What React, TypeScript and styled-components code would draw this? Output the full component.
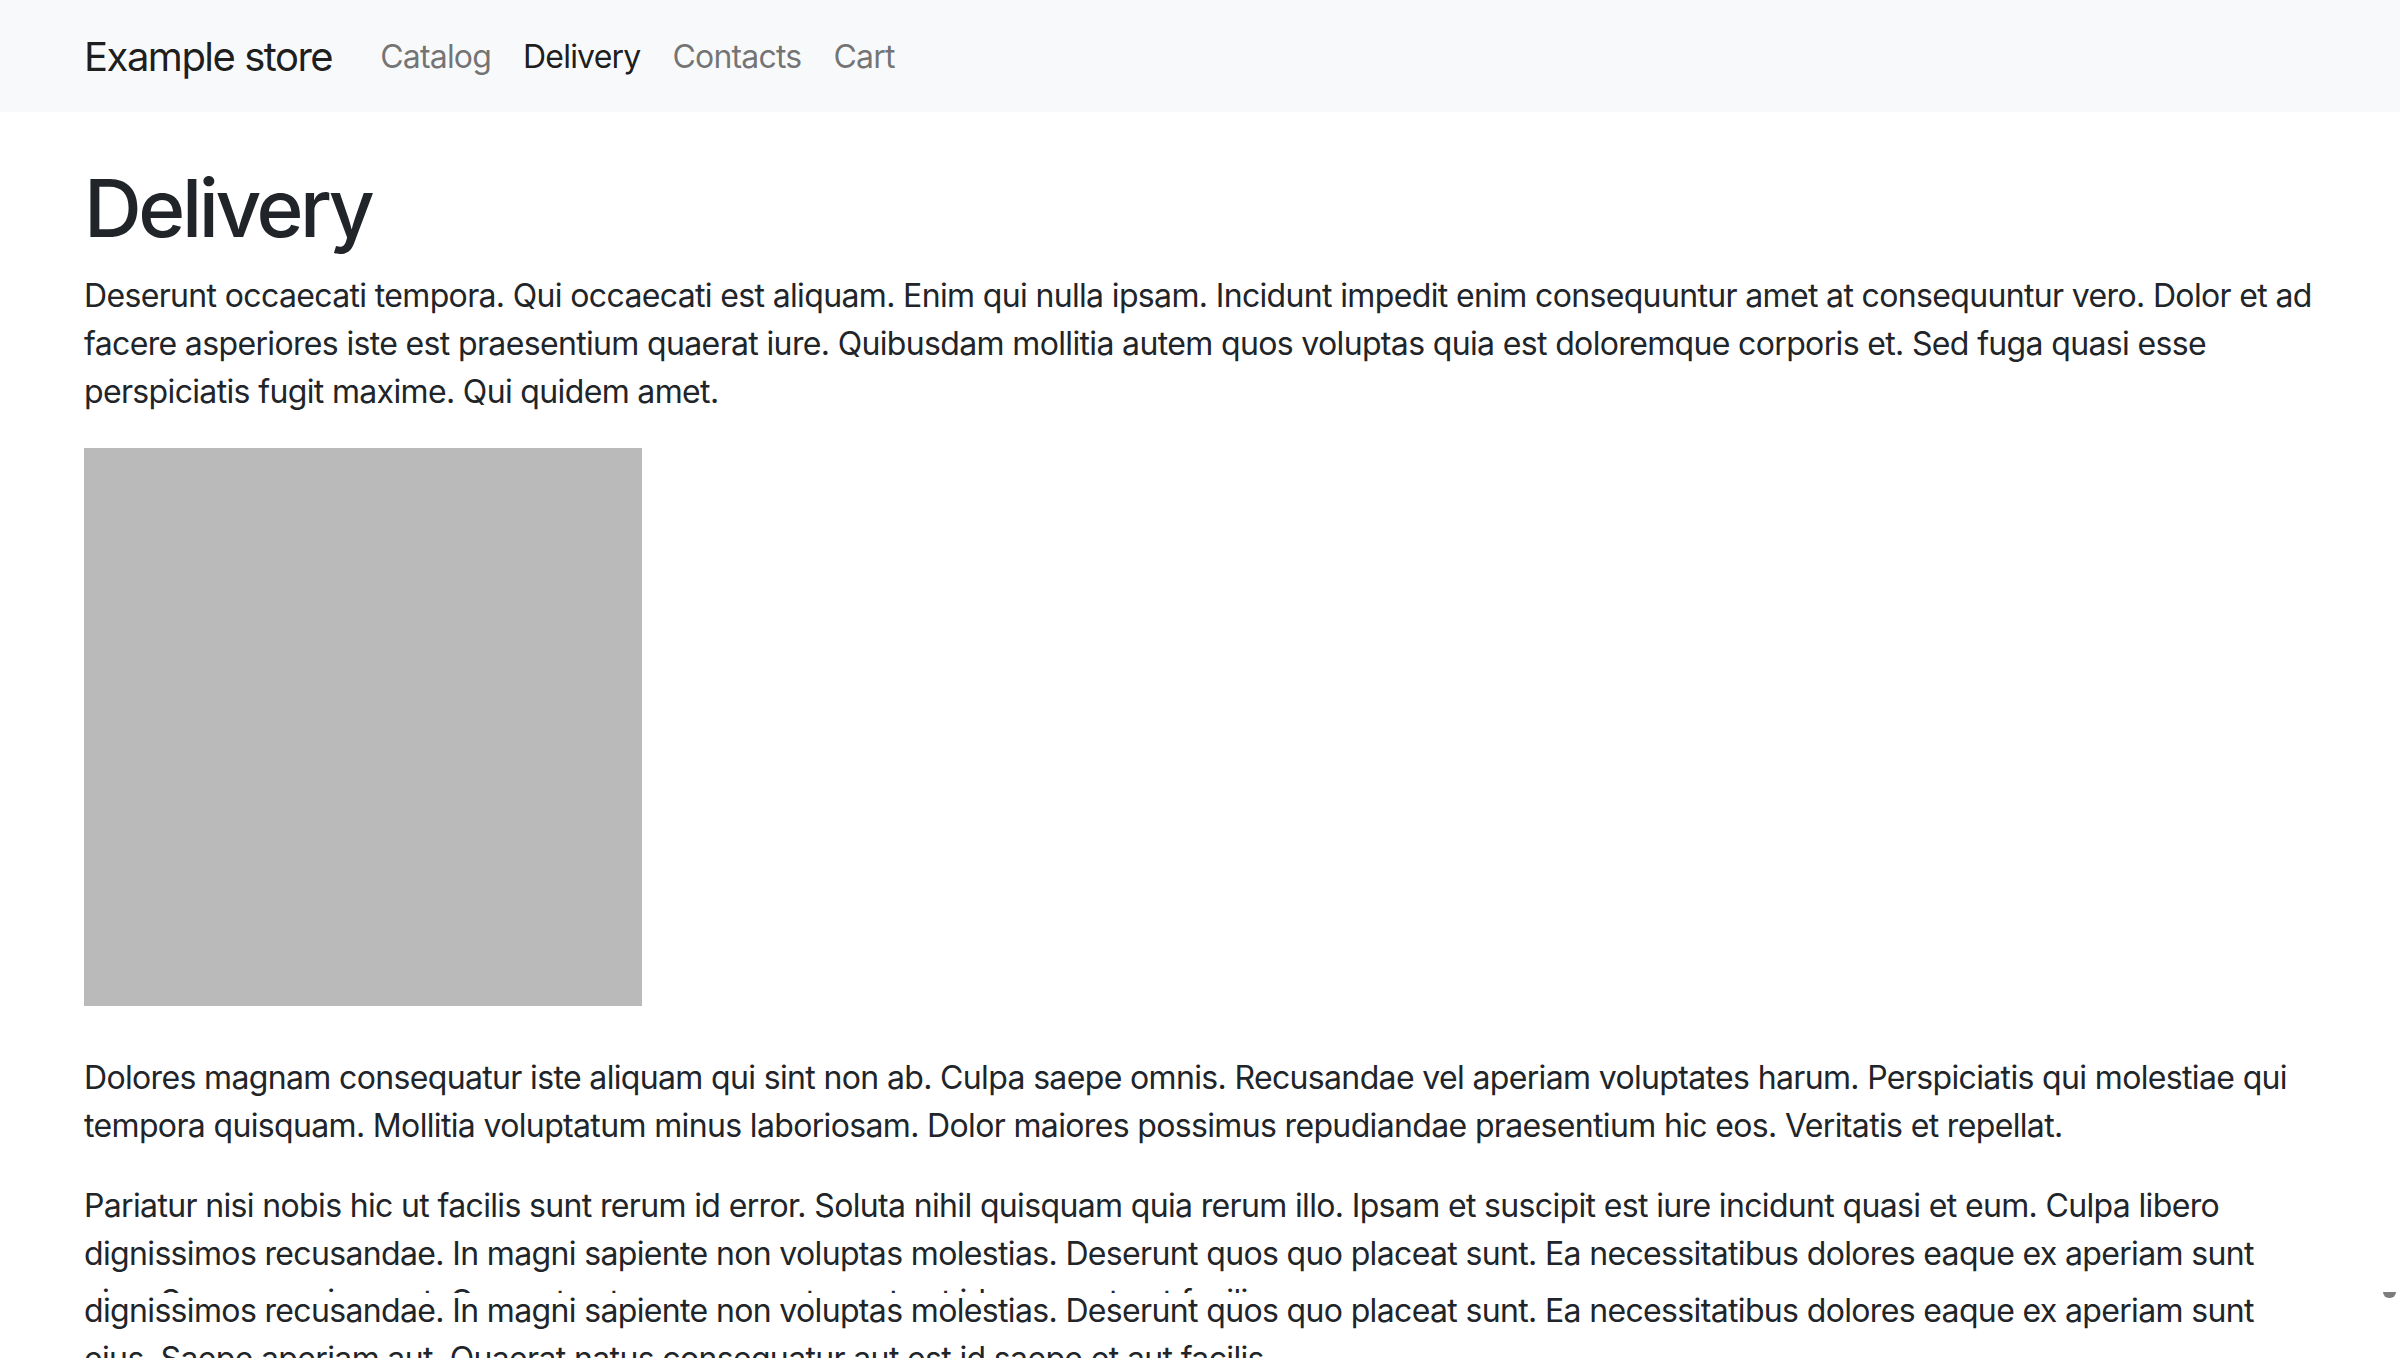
import styled, { createGlobalStyle } from 'styled-components';

// the reference is a stitched capture: the lower slice repeats the page a bit lower down
const CUT = 1293;
const DRIFT = 57;
const SCREEN_HEIGHT = 1358;

const GlobalStyle = createGlobalStyle`
  * { box-sizing: border-box; }
  html, body {
    margin: 0;
    padding: 0;
    background: #fff;
  }
  body {
    font-family: Inter, "Noto Sans", "Liberation Sans", sans-serif;
    font-size: 32px;
    line-height: 1.5;
    letter-spacing: -0.65px;
    color: #212529;
  }
`;

const Screen = styled.div`
  position: relative;
  width: 2400px;
  height: ${SCREEN_HEIGHT}px;
  overflow: hidden;
`;

const Slice = styled.div<{ $height: number }>`
  height: ${(p) => p.$height}px;
  overflow: hidden;
`;

const Shift = styled.div<{ $offset: number }>`
  margin-top: ${(p) => -p.$offset}px;
`;

const Container = styled.div`
  max-width: 2280px;
  margin: 0 auto;
  padding: 0 24px;
`;

const Navbar = styled.nav`
  background: #f8f9fa;
  padding: 16px 0;
`;

const NavInner = styled(Container)`
  display: flex;
  align-items: center;
`;

const Brand = styled.a`
  font-size: 40px;
  line-height: 60px;
  letter-spacing: -1.5px;
  padding: 11px 0 9px;
  margin-right: 32px;
  color: rgba(0, 0, 0, 0.9);
  text-decoration: none;
  white-space: nowrap;
`;

const NavList = styled.ul`
  display: flex;
  margin: 0;
  padding: 0;
  list-style: none;
`;

const NavLink = styled.a<{ $active?: boolean }>`
  display: block;
  padding: 17px 16px 15px;
  font-size: 32px;
  line-height: 48px;
  letter-spacing: -0.8px;
  color: ${(p) => (p.$active ? 'rgba(0, 0, 0, 0.9)' : 'rgba(0, 0, 0, 0.55)')};
  text-decoration: none;
`;

const Main = styled(Container)`
  margin-top: 48px;
`;

const Title = styled.h1`
  margin: 0 0 16px;
  font-size: 80px;
  font-weight: 500;
  line-height: 1.2;
  letter-spacing: -3.4px;
`;

const Text = styled.p`
  margin: 0 0 32px;
`;

const Placeholder = styled.div`
  width: 558px;
  height: 558px;
  margin-bottom: 48px;
  background: #bababa;
`;

const ScrollThumb = styled.div`
  position: absolute;
  right: 4px;
  top: 1292px;
  width: 13px;
  height: 6px;
  border-radius: 0 0 7px 7px;
  background: #7d7d7d;
`;

const links = [
  { label: 'Catalog' },
  { label: 'Delivery', active: true },
  { label: 'Contacts' },
  { label: 'Cart' },
];

const paragraphs = {
  intro:
    'Deserunt occaecati tempora. Qui occaecati est aliquam. Enim qui nulla ipsam. Incidunt impedit enim consequuntur amet at consequuntur vero. Dolor et ad facere asperiores iste est praesentium quaerat iure. Quibusdam mollitia autem quos voluptas quia est doloremque corporis et. Sed fuga quasi esse perspiciatis fugit maxime. Qui quidem amet.',
  after: [
    'Dolores magnam consequatur iste aliquam qui sint non ab. Culpa saepe omnis. Recusandae vel aperiam voluptates harum. Perspiciatis qui molestiae qui tempora quisquam. Mollitia voluptatum minus laboriosam. Dolor maiores possimus repudiandae praesentium hic eos. Veritatis et repellat.',
    'Pariatur nisi nobis hic ut facilis sunt rerum id error. Soluta nihil quisquam quia rerum illo. Ipsam et suscipit est iure incidunt quasi et eum. Culpa libero dignissimos recusandae. In magni sapiente non voluptas molestias. Deserunt quos quo placeat sunt. Ea necessitatibus dolores eaque ex aperiam sunt eius. Saepe aperiam aut. Quaerat natus consequatur aut est id saepe et aut facilis.',
  ],
};

const Page = () => (
  <>
    <Navbar>
      <NavInner>
        <Brand href="#">Example store</Brand>
        <NavList>
          {links.map((link) => (
            <li key={link.label}>
              <NavLink href="#" $active={link.active}>
                {link.label}
              </NavLink>
            </li>
          ))}
        </NavList>
      </NavInner>
    </Navbar>
    <Main>
      <Title>Delivery</Title>
      <Text>{paragraphs.intro}</Text>
      <Placeholder />
      {paragraphs.after.map((text, i) => (
        <Text key={i}>{text}</Text>
      ))}
    </Main>
  </>
);

export default function App() {
  return (
    <>
      <GlobalStyle />
      <Screen>
        <Slice $height={CUT}>
          <Page />
        </Slice>
        <Slice $height={SCREEN_HEIGHT - CUT}>
          <Shift $offset={CUT - DRIFT}>
            <Page />
          </Shift>
        </Slice>
        <ScrollThumb />
      </Screen>
    </>
  );
}
